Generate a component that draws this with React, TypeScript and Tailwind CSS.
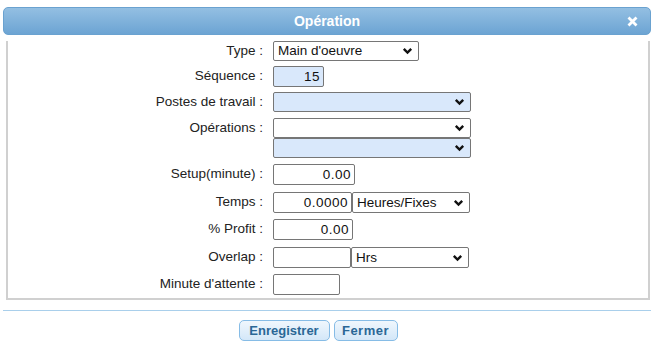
import React from "react";

const font = { fontFamily: '"Liberation Sans", Arial, sans-serif' };

function Chevron() {
  return (
    <svg width="11" height="8" viewBox="0 0 11 8" className="shrink-0">
      <path d="M1.8 1.8 L5.5 5.5 L9.2 1.8" fill="none" stroke="#111" strokeWidth="2.4" />
    </svg>
  );
}

function FakeSelect({ value, width, blue, h = "h-[20px]" }: { value?: string; width: string; blue?: boolean; h?: string }) {
  return (
    <div
      className={`${width} ${h} flex items-center justify-between border border-[#767676] rounded-[2px] pl-[4px] pr-[5px] text-[13.5px] text-[#111] ${
        blue ? "bg-[#d9e8fb]" : "bg-white"
      }`}
    >
      <span className="leading-none">{value ?? ""}</span>
      <Chevron />
    </div>
  );
}

function Box({ value, width, blue }: { value?: string; width: string; blue?: boolean }) {
  return (
    <div
      className={`${width} h-[21px] flex items-center justify-end border border-[#767676] rounded-[2px] pr-[3px] text-[13.5px] text-[#111] ${
        blue ? "bg-[#d9e8fb]" : "bg-white"
      }`}
    >
      <span className="leading-none tracking-[0.5px]">{value ?? ""}</span>
    </div>
  );
}

function Row({ label, mt, children }: { label: string; mt: string; children: React.ReactNode }) {
  return (
    <div className={`grid grid-cols-[255px_1fr] gap-x-[10px] ${mt}`}>
      <div className="text-right text-[13.5px] text-[#222] flex items-center justify-end h-[21px]">{label}</div>
      <div className="flex">{children}</div>
    </div>
  );
}

export default function App() {
  return (
    <div className="w-[653px] h-[345px] bg-white pt-[7px]" style={font}>
      <div className="mx-[3px] mr-[2px] h-[28px] rounded-[5px] border border-[#6aa2d0] bg-gradient-to-b from-[#93bfe2] to-[#6ca4d3] flex items-center relative">
        <div className="flex-1 text-center text-white font-bold text-[14px]">Opération</div>
        <svg width="11" height="11" viewBox="0 0 11 11" className="absolute right-[12px] top-[8px]">
          <path d="M1.5 1.5 L9.5 9.5 M9.5 1.5 L1.5 9.5" stroke="#fff" strokeWidth="2.8" />
        </svg>
      </div>

      <div className="mx-[6px] mr-[3px] border-x-2 border-b-2 border-[#d0d0d0] pb-[3px]">
        <Row label="Type :" mt="mt-[6px]">
          <FakeSelect value="Main d'oeuvre" width="w-[146px]" />
        </Row>
        <Row label="Séquence :" mt="mt-[4px]">
          <Box value="15" width="w-[51px]" blue />
        </Row>
        <Row label="Postes de travail :" mt="mt-[5px]">
          <FakeSelect width="w-[198px]" blue />
        </Row>
        <Row label="Opérations :" mt="mt-[5px]">
          <div className="flex flex-col">
            <FakeSelect width="w-[198px]" />
            <FakeSelect width="w-[198px]" blue />
          </div>
        </Row>
        <Row label="Setup(minute) :" mt="mt-[6px]">
          <Box value="0.00" width="w-[82px]" />
        </Row>
        <Row label="Temps :" mt="mt-[7px]">
          <Box value="0.0000" width="w-[79px]" />
          <FakeSelect value="Heures/Fixes" width="w-[118px]" h="h-[21px]" />
        </Row>
        <Row label="% Profit :" mt="mt-[6px]">
          <Box value="0.00" width="w-[80px]" />
        </Row>
        <Row label="Overlap :" mt="mt-[7px]">
          <Box width="w-[78px]" />
          <FakeSelect value="Hrs" width="w-[118px]" h="h-[21px]" />
        </Row>
        <Row label="Minute d'attente :" mt="mt-[6px]">
          <Box width="w-[67px]" />
        </Row>
      </div>

      <div className="mx-[3px] mr-[2px] mt-[10px] h-px bg-[#a9cfeb]" />

      <div className="flex justify-center gap-[4px] mt-[9px] pr-[17px]">
        <button className="h-[21px] w-[91px] rounded-[5px] border border-[#86bce6] bg-gradient-to-b from-[#f0f7fd] to-[#d3e7f8] text-[13px] font-bold text-[#2a6796]">
          Enregistrer
        </button>
        <button className="h-[21px] w-[64px] rounded-[5px] border border-[#86bce6] bg-gradient-to-b from-[#f0f7fd] to-[#d3e7f8] text-[13px] font-bold text-[#2a6796] tracking-[0.5px]">
          Fermer
        </button>
      </div>
    </div>
  );
}
